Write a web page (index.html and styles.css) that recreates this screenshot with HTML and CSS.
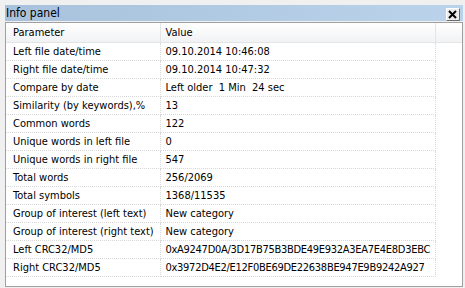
FILE: index.html
```html
<!DOCTYPE html>
<html>
<head>
    <title>Info panel</title>
    <link rel="stylesheet" href="styles.css">
</head>
<body>
    <div id="window">
        <div id="titlebar">
            <span class="title">Info panel</span>
            <button class="close-btn" type="button">
                <svg width="10" height="9" viewBox="0 0 10 9">
                    <path d="M1 1 L8 8 M8 1 L1 8" stroke="#000" stroke-width="2" fill="none"/>
                </svg>
            </button>
        </div>
        <div id="panel">
            <table class="grid">
                <thead>
                    <tr>
                        <th class="col-param">Parameter</th>
                        <th class="col-value">Value</th>
                        <th class="col-rest"></th>
                    </tr>
                </thead>
                <tbody>
                    <tr><td>Left file date/time</td><td>09.10.2014 10:46:08</td><td></td></tr>
                    <tr><td>Right file date/time</td><td>09.10.2014 10:47:32</td><td></td></tr>
                    <tr><td>Compare by date</td><td>Left older&nbsp; 1 Min&nbsp; 24 sec</td><td></td></tr>
                    <tr><td>Similarity (by keywords),%</td><td>13</td><td></td></tr>
                    <tr><td>Common words</td><td>122</td><td></td></tr>
                    <tr><td>Unique words in left file</td><td>0</td><td></td></tr>
                    <tr><td>Unique words in right file</td><td>547</td><td></td></tr>
                    <tr><td>Total words</td><td>256/2069</td><td></td></tr>
                    <tr><td>Total symbols</td><td>1368/11535</td><td></td></tr>
                    <tr><td>Group of interest (left text)</td><td>New category</td><td></td></tr>
                    <tr><td>Group of interest (right text)</td><td>New category</td><td></td></tr>
                    <tr><td>Left CRC32/MD5</td><td class="hex">0xA9247D0A/3D17B75B3BDE49E932A3EA7E4E8D3EBC</td><td></td></tr>
                    <tr><td>Right CRC32/MD5</td><td class="hex">0x3972D4E2/E12F0BE69DE22638BE947E9B9242A927</td><td></td></tr>
                </tbody>
            </table>
        </div>
    </div>
</body>
</html>
```

FILE: styles.css
```css
body {
    margin: 0;
    background-color: #f0f0f0;
    font-family: "DejaVu Sans Condensed", "DejaVu Sans", sans-serif;
    font-size: 11px;
    color: #000;
}
#window {
    padding: 5px 2px 2px 5px;
}
#titlebar {
    display: flex;
    justify-content: space-between;
    align-items: center;
    height: 16px;
    background: linear-gradient(to right, #a8c2dd, #bbd3ea);
}
#titlebar .title {
    font-size: 12px;
    padding-left: 1px;
}
#titlebar .close-btn {
    width: 14px;
    height: 13px;
    margin-right: 3px;
    margin-top: 2px;
    padding: 0;
    display: flex;
    align-items: center;
    justify-content: center;
    background-color: #ececec;
    border: 1px solid;
    border-color: #fff #6d6d6d #6d6d6d #fff;
}
#panel {
    height: 263px;
    margin-top: 1px;
    background-color: #fff;
    border: 1px solid #a0a0a0;
    overflow: hidden;
}
.grid {
    border-collapse: collapse;
    table-layout: fixed;
    width: 100%;
}
.grid th {
    box-sizing: border-box;
    height: 19px;
    padding: 0 0 0 7px;
    text-align: left;
    font-weight: normal;
    background: linear-gradient(#ffffff, #f1f2f4);
    border-right: 1px solid #e3e4e6;
    border-bottom: 1px solid #e3e4e6;
}
.grid th:last-child {
    border-right: none;
}
.grid th.col-value {
    padding-left: 5px;
}
.grid .col-param {
    width: 154px;
}
.grid .col-value {
    width: 275px;
}
.grid td {
    height: 16px;
    padding: 1px 0 0 7px;
    white-space: nowrap;
    overflow: hidden;
    border-right: 1px dotted #d8d8d8;
    border-bottom: 1px dotted #d8d8d8;
}
.grid td:nth-child(2) {
    padding-left: 5px;
}
.grid td.hex {
    letter-spacing: -0.28px;
}
.grid td:last-child {
    border-bottom: none;
    border-right: none;
}
```
